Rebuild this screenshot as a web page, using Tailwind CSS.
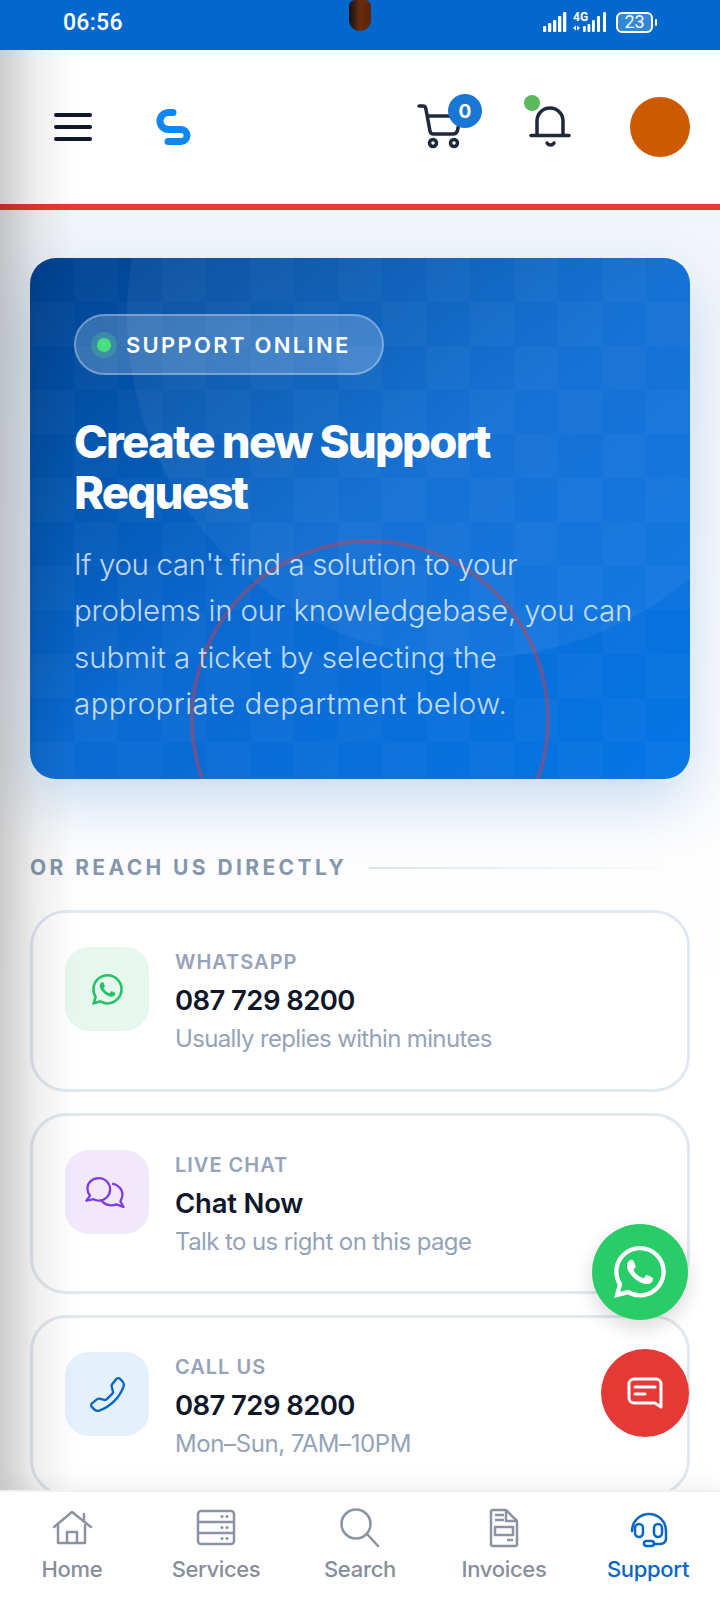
<!DOCTYPE html>
<html lang="en">
<head>
<meta charset="utf-8">
<title>Support</title>
<script src="https://cdn.jsdelivr.net/npm/@tailwindcss/browser@4"></script>
</head>
<body class="m-0 bg-white">
<div class="relative flex h-[1600px] w-[720px] flex-col overflow-hidden bg-white font-['Inter','Liberation_Sans',sans-serif]">
  <!-- status bar -->
  <div class="relative flex h-[50px] shrink-0 items-center justify-between bg-[#0268cd] pb-[6px] pl-[63px] pr-[63px] text-white">
    <span class="font-['Roboto',sans-serif] text-[23px] leading-none font-medium tracking-[0.3px]">06:56</span>
    <div class="absolute left-[349px] top-0 h-[31px] w-[22px] rounded-b-[11px] rounded-t-[6px] bg-linear-to-r from-[#111] via-[#6b2c0c] to-[#5a2408]"></div>
    <div class="flex items-center">
      <svg width="24" height="22" viewBox="0 0 24 22" fill="#fff" class="mr-[6px]"><rect x="0" y="15" width="3.300" height="6" rx="1"/><rect x="5" y="12" width="3.300" height="9" rx="1"/><rect x="10" y="9" width="3.300" height="12" rx="1"/><rect x="15" y="5" width="3.300" height="16" rx="1"/><rect x="20" y="1" width="3.300" height="20" rx="1"/></svg>
      <div class="relative mr-[7px] h-[22px] w-[36px]">
        <span class="absolute left-[0px] top-[0px] font-['Roboto',sans-serif] text-[12px] leading-none font-bold">4G</span>
        <svg width="36" height="22" viewBox="0 0 36 22" fill="#fff" class="absolute left-0 top-0"><path d="M0 17l3-2.500v5zM7 17l-3-2.500v5z"/><rect x="10" y="15" width="2.800" height="6" rx="1"/><rect x="14.500" y="13" width="2.800" height="8" rx="1"/><rect x="19" y="9" width="2.800" height="12" rx="1"/><rect x="24" y="5" width="3" height="16" rx="1"/><rect x="30" y="1" width="3" height="20" rx="1"/></svg>
      </div>
      <div class="flex h-[21px] w-[37px] items-center justify-center rounded-[6px] border-2 border-white bg-white/20 font-['Roboto',sans-serif] text-[18px] leading-none">23</div>
      <div class="ml-[2px] h-[7px] w-[2px] rounded-sm bg-white"></div>
    </div>
  </div>

  <div class="relative flex min-h-0 flex-1 flex-col">
    <!-- header -->
    <header class="relative flex h-[160px] shrink-0 items-center border-b-[6px] border-[#e53935] bg-white">
      <div class="ml-[54px] flex w-[38px] flex-col gap-[8px]">
        <div class="h-[4px] rounded-full bg-[#0f172a]"></div>
        <div class="h-[4px] rounded-full bg-[#0f172a]"></div>
        <div class="h-[4px] rounded-full bg-[#0f172a]"></div>
      </div>
      <svg class="absolute left-[150px] top-[50px]" width="50" height="50" viewBox="150 100 50 50" fill="none" stroke="#0e87ee" stroke-width="7" stroke-linecap="round"><path d="M173 112.500h-4.500a8.500 8.500 0 0 0 0 17h12.500a6 6 0 0 1 0 12h-13"/></svg>
      <svg class="absolute left-[415px] top-[50px]" width="55" height="50" viewBox="415 100 55 50" fill="none" stroke="#1e293b" stroke-width="3.500" stroke-linecap="round" stroke-linejoin="round"><path d="M419 106h4c1.500 0 2.500 1 2.800 2.500L430 131c.3 2 1.500 3 3.500 3H453c2.500 0 4-1.500 4.500-3.500L460 118"/><path d="M428 116h28"/><circle cx="433" cy="143" r="3.500"/><circle cx="454" cy="143" r="3.500"/></svg>
      <div class="absolute left-[448px] top-[44px] flex h-[34px] w-[34px] items-center justify-center rounded-full bg-[#1976d2] text-[19px] leading-none font-bold text-white">0</div>
      <svg class="absolute left-[525px] top-[50px]" width="50" height="50" viewBox="525 100 50 50" fill="none" stroke="#1e293b" stroke-width="3.500" stroke-linecap="round"><path d="M537 135v-14a13 13 0 0 1 26 0v14"/><path d="M531 135.500h38"/><path d="M547 143a4 4 0 0 0 7 0"/></svg>
      <div class="absolute left-[524px] top-[45px] h-[16px] w-[16px] rounded-full bg-[#5cb85c]"></div>
      <div class="absolute left-[630px] top-[47px] h-[60px] w-[60px] rounded-full bg-[#cc5a00]"></div>
    </header>

    <!-- main -->
    <main class="min-h-0 flex-1 overflow-hidden bg-linear-to-b from-[#f1f5f9] to-white to-[62%] px-[30px] pt-[48px]">
      <section class="relative h-[521px] overflow-hidden rounded-[26px] bg-linear-to-br from-[#00428f] via-[#0a6ad2] to-[#0575e6] pl-[44px] pt-[56px] shadow-[0_24px_60px_rgba(2,90,180,0.2)]">
        <div class="absolute inset-0 bg-[conic-gradient(rgba(255,255,255,0.025)_25%,transparent_0_50%,rgba(255,255,255,0.025)_0_75%,transparent_0)] bg-[size:88px_88px]"></div>
        <div class="absolute left-[97px] top-[-286px] h-[686px] w-[686px] rounded-full bg-white/[0.05]"></div>
        <div class="absolute left-[160px] top-[281px] h-[360px] w-[360px] rounded-full border-[4px] border-[#e53935]/40"></div>
        <div class="relative">
          <div class="flex h-[61px] w-[310px] items-center rounded-full border-2 border-white/30 bg-white/20 pl-[15px]">
            <span class="flex h-[26px] w-[26px] items-center justify-center rounded-full bg-[#4ade80]/25"><span class="h-[14px] w-[14px] rounded-full bg-[#4ade80]"></span></span>
            <span class="ml-[9px] text-[22px] leading-none font-semibold tracking-[2.300px] text-white">SUPPORT ONLINE</span>
          </div>
          <h1 class="mt-[41px] text-[45.500px] leading-[51px] font-extrabold tracking-[-1.800px] text-white">Create new Support<br>Request</h1>
          <p class="mt-[23px] text-[29.500px] leading-[46.300px] font-light whitespace-nowrap text-white/75">
            <span class="block tracking-[-0.400px]">If you can't find a solution to your</span>
            <span class="block tracking-[-0.200px]">problems in our knowledgebase, you can</span>
            <span class="block tracking-[0px]">submit a ticket by selecting the</span>
            <span class="block tracking-[0.450px]">appropriate department below.</span>
          </p>
        </div>
      </section>

      <div class="mt-[75px] flex h-[28px] items-center">
        <span class="text-[21px] leading-[28px] font-bold tracking-[3.400px] text-[#8497ae]">OR REACH US DIRECTLY</span>
        <div class="ml-[22px] h-[2px] w-[310px] bg-linear-to-r from-[#dbe4ee] to-transparent"></div>
      </div>

      <div class="mt-[28px] flex flex-col gap-[21px]">
        <div class="flex h-[182px] gap-[26px] rounded-[36px] border-[3px] border-[#e2e8f0] bg-white pl-[32px] pt-[34px]">
          <div class="flex h-[84px] w-[84px] shrink-0 items-center justify-center rounded-[24px] bg-[#e6f8ee]">
            <svg width="31" height="31" viewBox="0 0 16 16" fill="#25c263"><path d="M13.601 2.326A7.85 7.85 0 0 0 7.994 0C3.627 0 .068 3.558.064 7.926c0 1.399.366 2.76 1.057 3.965L0 16l4.204-1.102a7.9 7.9 0 0 0 3.79.965h.004c4.368 0 7.926-3.558 7.93-7.93A7.9 7.9 0 0 0 13.6 2.326zM7.994 14.521a6.6 6.6 0 0 1-3.356-.92l-.24-.144-2.494.654.666-2.433-.156-.251a6.56 6.56 0 0 1-1.007-3.505c0-3.626 2.957-6.584 6.591-6.584a6.56 6.56 0 0 1 4.66 1.931 6.56 6.56 0 0 1 1.928 4.66c-.004 3.639-2.961 6.592-6.592 6.592m3.615-4.934c-.197-.099-1.17-.578-1.353-.646-.182-.065-.315-.099-.445.099-.133.197-.513.646-.627.775-.114.133-.232.148-.43.05-.197-.1-.836-.308-1.592-.985-.59-.525-.985-1.175-1.103-1.372-.114-.198-.011-.304.088-.403.087-.088.197-.232.296-.346.1-.114.133-.198.198-.33.065-.134.034-.248-.015-.347-.05-.099-.445-1.076-.612-1.47-.16-.389-.323-.335-.445-.34-.114-.007-.247-.007-.38-.007a.73.73 0 0 0-.529.247c-.182.198-.691.677-.691 1.654s.71 1.916.81 2.049c.098.133 1.394 2.132 3.383 2.992.47.205.84.326 1.129.418.475.152.904.129 1.246.08.38-.058 1.171-.48 1.338-.943.164-.464.164-.86.114-.943-.049-.084-.182-.133-.38-.232"/></svg>
          </div>
          <div class="mt-[1px]">
            <div class="text-[20px] leading-[28px] font-semibold tracking-[1px] text-[#94a3b8]">WHATSAPP</div>
            <div class="mt-[6px] text-[27.500px] leading-[36px] font-semibold tracking-[-0.600px] text-[#0f172a]">087 729 8200</div>
            <div class="mt-[5px] text-[24px] leading-[32px] tracking-[-0.650px] text-[#94a3b8]">Usually replies within minutes</div>
          </div>
        </div>

        <div class="flex h-[181px] gap-[26px] rounded-[36px] border-[3px] border-[#e2e8f0] bg-white pl-[32px] pt-[34px]">
          <div class="flex h-[84px] w-[84px] shrink-0 items-center justify-center rounded-[24px] bg-[#f1e8fb]">
            <svg width="46" height="33" viewBox="0 0 44 32" fill="none" stroke="#7c3aed" stroke-width="2.200" stroke-linejoin="round"><path d="M14 2C7.500 2 3 6.500 3 12c0 3 1 5 2.500 7L2 24l7-1.500c1.500.8 3.200 1.300 5 1.300 6.500 0 11-5 11-10.800S20.500 2 14 2z"/><path d="M27 7.500c5.200.8 10 4.800 10 10.500 0 2.800-1 4.800-2 6.500L38 30l-7-2.500c-1.500.7-3 1-4.700 1-4.500 0-8.300-2.300-10.300-5.500"/></svg>
          </div>
          <div class="mt-[1px]">
            <div class="text-[20px] leading-[28px] font-semibold tracking-[1px] text-[#94a3b8]">LIVE CHAT</div>
            <div class="mt-[6px] text-[27.500px] leading-[36px] font-semibold tracking-[-0.200px] text-[#0f172a]">Chat Now</div>
            <div class="mt-[5px] text-[24px] leading-[32px] tracking-[-0.600px] text-[#94a3b8]">Talk to us right on this page</div>
          </div>
        </div>

        <div class="flex h-[181px] shrink-0 gap-[26px] rounded-[36px] border-[3px] border-[#e2e8f0] bg-white pl-[32px] pt-[34px]">
          <div class="flex h-[84px] w-[84px] shrink-0 items-center justify-center rounded-[24px] bg-[#e4f0fb]">
            <svg width="35" height="35" viewBox="0 0 16 16" fill="#0866c6" class="-scale-x-100"><path d="M3.654 1.328a.678.678 0 0 0-1.015-.063L1.605 2.3c-.483.484-.661 1.169-.45 1.77a17.6 17.6 0 0 0 4.168 6.608 17.6 17.6 0 0 0 6.608 4.168c.601.211 1.286.033 1.77-.45l1.034-1.034a.678.678 0 0 0-.063-1.015l-2.307-1.794a.68.68 0 0 0-.58-.122l-2.19.547a1.75 1.75 0 0 1-1.657-.459L5.482 8.062a1.75 1.75 0 0 1-.46-1.657l.548-2.19a.68.68 0 0 0-.122-.58zM1.884.511a1.745 1.745 0 0 1 2.612.163L6.29 2.98c.329.423.445.974.315 1.494l-.547 2.19a.68.68 0 0 0 .178.643l2.457 2.457a.68.68 0 0 0 .644.178l2.189-.547a1.75 1.75 0 0 1 1.494.315l2.306 1.794c.829.645.905 1.87.163 2.611l-1.034 1.034c-.74.74-1.846 1.065-2.877.702a18.6 18.6 0 0 1-7.01-4.42 18.6 18.6 0 0 1-4.42-7.009c-.362-1.03-.037-2.137.703-2.877z"/></svg>
          </div>
          <div class="mt-[1px]">
            <div class="text-[20px] leading-[28px] font-semibold tracking-[1px] text-[#94a3b8]">CALL US</div>
            <div class="mt-[6px] text-[27.500px] leading-[36px] font-semibold tracking-[-0.600px] text-[#0f172a]">087 729 8200</div>
            <div class="mt-[5px] text-[24px] leading-[32px] tracking-[-0.400px] text-[#94a3b8]">Mon–Sun, 7AM–10PM</div>
          </div>
        </div>
      </div>
    </main>
    <!-- left edge shade -->
    <div class="pointer-events-none absolute inset-y-0 left-0 w-[76px] bg-linear-to-r from-black/20 via-black/6 to-transparent"></div>
  </div>

  <!-- bottom nav -->
  <nav class="relative z-10 grid h-[110px] shrink-0 grid-cols-5 border-t-2 border-[#eef0f3] bg-white shadow-[0_-8px_20px_rgba(0,0,0,0.05)]">
    <a class="flex flex-col items-center pt-[16px] text-[22px] leading-[30px] font-medium tracking-[-0.300px] text-[#868e9c]">
      <svg width="44" height="40" viewBox="50 1508 44 40" fill="none" stroke="#8a92a3" stroke-width="2.500" stroke-linejoin="round" stroke-linecap="round"><path d="M54 1527l18-15 19 15"/><path d="M58 1525v18h27v-18"/><path d="M67 1543v-11h10v11"/><path d="M84 1514v7"/></svg>
      <span class="mt-[6px]">Home</span>
    </a>
    <a class="flex flex-col items-center pt-[16px] text-[22px] leading-[30px] font-medium tracking-[-0.400px] text-[#868e9c]">
      <svg width="44" height="40" viewBox="194 1508 44 40" fill="none" stroke="#8a92a3" stroke-width="2.500"><rect x="198" y="1511" width="36" height="33" rx="3"/><path d="M198 1522h36M198 1533h36"/><g fill="#8a92a3" stroke="none"><circle cx="222" cy="1516.500" r="1.500"/><circle cx="227" cy="1516.500" r="1.500"/><circle cx="222" cy="1527.500" r="1.500"/><circle cx="227" cy="1527.500" r="1.500"/><circle cx="222" cy="1538.500" r="1.500"/><circle cx="227" cy="1538.500" r="1.500"/></g></svg>
      <span class="mt-[6px]">Services</span>
    </a>
    <a class="flex flex-col items-center pt-[16px] text-[22px] leading-[30px] font-medium tracking-[-0.300px] text-[#868e9c]">
      <svg width="44" height="40" viewBox="338 1508 44 40" fill="none" stroke="#8a92a3" stroke-width="2.500" stroke-linecap="round"><circle cx="356" cy="1524" r="14.500"/><path d="M367 1534l11 12"/></svg>
      <span class="mt-[6px]">Search</span>
    </a>
    <a class="flex flex-col items-center pt-[16px] text-[22px] leading-[30px] font-medium tracking-[-0.300px] text-[#868e9c]">
      <svg width="44" height="40" viewBox="482 1508 44 40" fill="none" stroke="#8a92a3" stroke-width="2.500" stroke-linejoin="round"><path d="M493 1510h13l11 11v23a2 2 0 0 1-2 2h-22a2 2 0 0 1-2-2v-32a2 2 0 0 1 2-2z"/><path d="M506 1510v11h11"/><path d="M495 1515h9M495 1520h9M507 1540h6"/><rect x="495" y="1527" width="18" height="8"/></svg>
      <span class="mt-[6px]">Invoices</span>
    </a>
    <a class="flex flex-col items-center pt-[16px] text-[22px] leading-[30px] font-medium tracking-[-0.300px] text-[#0866c6]">
      <svg width="44" height="40" viewBox="626 1508 44 40" fill="none" stroke="#0866c6" stroke-width="2.500" stroke-linecap="round"><path d="M632 1531a17 17 0 1 1 34 0v7c0 4-2 6-6 6h-6"/><rect x="635" y="1524" width="8" height="13" rx="4"/><rect x="654" y="1524" width="8" height="13" rx="4"/><rect x="644" y="1541" width="10" height="5" rx="2.500"/></svg>
      <span class="mt-[6px]">Support</span>
    </a>
  </nav>

  <!-- floating buttons -->
  <div class="absolute left-[592px] top-[1224px] z-20 flex h-[96px] w-[96px] items-center justify-center rounded-full bg-[#28cd67] shadow-[0_8px_20px_rgba(0,0,0,0.15)]">
    <svg width="52" height="52" viewBox="0 0 16 16" fill="#fff"><path d="M13.601 2.326A7.85 7.85 0 0 0 7.994 0C3.627 0 .068 3.558.064 7.926c0 1.399.366 2.76 1.057 3.965L0 16l4.204-1.102a7.9 7.9 0 0 0 3.79.965h.004c4.368 0 7.926-3.558 7.93-7.93A7.9 7.9 0 0 0 13.6 2.326zM7.994 14.521a6.6 6.6 0 0 1-3.356-.92l-.24-.144-2.494.654.666-2.433-.156-.251a6.56 6.56 0 0 1-1.007-3.505c0-3.626 2.957-6.584 6.591-6.584a6.56 6.56 0 0 1 4.66 1.931 6.56 6.56 0 0 1 1.928 4.66c-.004 3.639-2.961 6.592-6.592 6.592m3.615-4.934c-.197-.099-1.17-.578-1.353-.646-.182-.065-.315-.099-.445.099-.133.197-.513.646-.627.775-.114.133-.232.148-.43.05-.197-.1-.836-.308-1.592-.985-.59-.525-.985-1.175-1.103-1.372-.114-.198-.011-.304.088-.403.087-.088.197-.232.296-.346.1-.114.133-.198.198-.33.065-.134.034-.248-.015-.347-.05-.099-.445-1.076-.612-1.47-.16-.389-.323-.335-.445-.34-.114-.007-.247-.007-.38-.007a.73.73 0 0 0-.529.247c-.182.198-.691.677-.691 1.654s.71 1.916.81 2.049c.098.133 1.394 2.132 3.383 2.992.47.205.84.326 1.129.418.475.152.904.129 1.246.08.38-.058 1.171-.48 1.338-.943.164-.464.164-.86.114-.943-.049-.084-.182-.133-.38-.232"/></svg>
  </div>
  <div class="absolute left-[601px] top-[1349px] z-20 flex h-[88px] w-[88px] items-center justify-center rounded-full bg-[#e53935]">
    <svg width="36" height="32" viewBox="0 0 36 32" fill="none" stroke="#fff" stroke-width="3" stroke-linecap="round" stroke-linejoin="round"><path d="M7 2h22a5 5 0 0 1 5 5v23l-6-4H7a5 5 0 0 1-5-5V7a5 5 0 0 1 5-5z"/><path d="M8 10h20M8 17h10"/></svg>
  </div>
</div>
</body>
</html>
